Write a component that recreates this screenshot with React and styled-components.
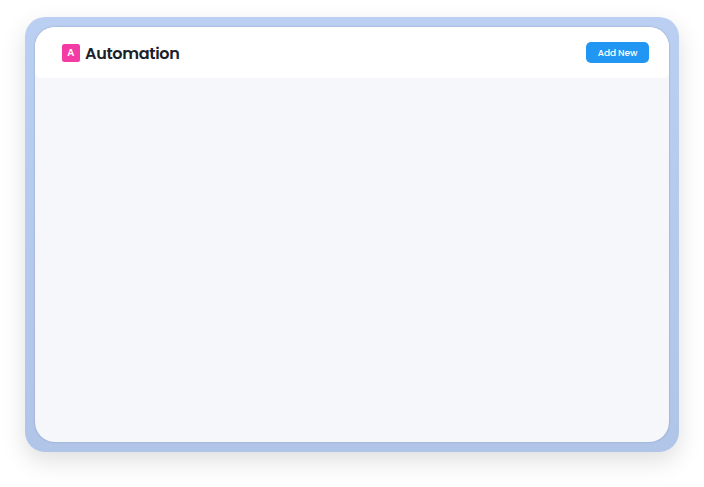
import React from "react";
import styled, { createGlobalStyle } from "styled-components";

const GlobalStyle = createGlobalStyle`
  *, *::before, *::after { box-sizing: border-box; }
  body {
    margin: 0;
    background: #fff;
    font-family: Poppins, Inter, "Open Sans", sans-serif;
    -webkit-font-smoothing: antialiased;
  }
`;

const Page = styled.div`
  height: 487px;
  padding: 17.4px 25.5px 0 25px;
  overflow: hidden;
`;

const Frame = styled.div`
  height: 435px;
  padding: 10px;
  border-radius: 20px;
  background: linear-gradient(180deg, #bacff1, #b1c5e8);
  box-shadow: 0 9px 24px rgba(0, 0, 0, 0.13);
`;

const Panel = styled.main`
  height: 415px;
  border-radius: 20px;
  overflow: hidden;
  background: #f5f7fb;
  box-shadow: 0 0 2px rgba(65, 85, 125, 0.4);
`;

const Header = styled.header`
  display: flex;
  align-items: center;
  justify-content: space-between;
  height: 51px;
  padding: 0 19.5px 0 26.5px;
  border-radius: 0 0 6px 6px;
  background: #fff;
`;

const Brand = styled.div`
  display: flex;
  align-items: center;
  gap: 5px;
`;

const Badge = styled.span`
  display: grid;
  place-items: center;
  width: 18.5px;
  height: 18.5px;
  border-radius: 2.5px;
  background: #f43aa4;
  color: #fff;
  font-size: 10px;
  font-weight: 600;
  line-height: 1;
`;

const Title = styled.h1`
  margin: 0;
  padding-top: 1.4px;
  color: #1b2128;
  font-size: 16px;
  font-weight: 600;
  line-height: 20px;
  letter-spacing: -0.3px;
`;

const Button = styled.button`
  width: 63px;
  height: 21px;
  padding: 1px 0 0;
  border: 0;
  border-radius: 5px;
  background: #2196f3;
  color: #fff;
  font: 500 9px/20px Poppins, Inter, "Open Sans", sans-serif;
  letter-spacing: -0.1px;
`;

export default function App() {
  return (
    <Page>
      <GlobalStyle />
      <Frame>
        <Panel>
          <Header>
            <Brand>
              <Badge>A</Badge>
              <Title>Automation</Title>
            </Brand>
            <Button type="button">Add New</Button>
          </Header>
        </Panel>
      </Frame>
    </Page>
  );
}
